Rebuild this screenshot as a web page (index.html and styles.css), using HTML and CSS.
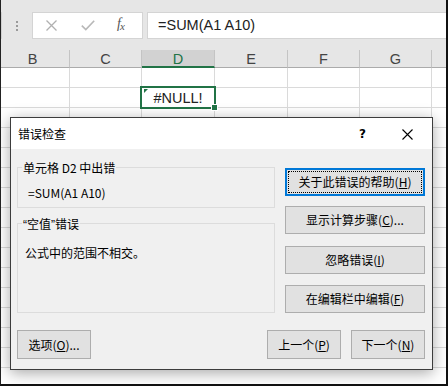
FILE: index.html
```html
<!DOCTYPE html>
<html lang="zh-CN">
<head>
<meta charset="utf-8">
<link rel="stylesheet" href="styles.css">
</head>
<body>
<div class="app">
  <div class="fbar">
    <div class="namebox"></div>
    <div class="grip"><span></span><span></span><span></span></div>
    <div class="fbtns">
      <svg class="ic-x" width="11" height="11" viewBox="0 0 11 11"><path d="M0.5 0.5L10.5 10.5M10.5 0.5L0.5 10.5" stroke="#b0b0b0" stroke-width="1.3" fill="none"/></svg>
      <svg class="ic-ok" width="14" height="11" viewBox="0 0 14 11"><path d="M0.8 5.6L4.8 9.6L13.2 0.8" stroke="#b8b8b8" stroke-width="1.6" fill="none"/></svg>
      <span class="fx">f<sub>x</sub></span>
    </div>
    <div class="finput">=SUM(A1 A10)</div>
  </div>
  <div class="sheet">
    <div class="row head">
      <div class="c cb">B</div><div class="c cc">C</div><div class="c cd sel">D</div><div class="c ce">E</div><div class="c cf">F</div><div class="c cg">G</div><div class="c ch"></div>
    </div>
    <div class="row"><div class="c cb"></div><div class="c cc"></div><div class="c cd"></div><div class="c ce"></div><div class="c cf"></div><div class="c cg"></div><div class="c ch"></div></div>
    <div class="row"><div class="c cb"></div><div class="c cc"></div><div class="c cd active"><span class="tri"></span>#NULL!<span class="handle"></span></div><div class="c ce"></div><div class="c cf"></div><div class="c cg"></div><div class="c ch"></div></div>
    <div class="row"><div class="c cb"></div><div class="c cc"></div><div class="c cd"></div><div class="c ce"></div><div class="c cf"></div><div class="c cg"></div><div class="c ch"></div></div>
    <div class="row"><div class="c cb"></div><div class="c cc"></div><div class="c cd"></div><div class="c ce"></div><div class="c cf"></div><div class="c cg"></div><div class="c ch"></div></div>
    <div class="row"><div class="c cb"></div><div class="c cc"></div><div class="c cd"></div><div class="c ce"></div><div class="c cf"></div><div class="c cg"></div><div class="c ch"></div></div>
    <div class="row"><div class="c cb"></div><div class="c cc"></div><div class="c cd"></div><div class="c ce"></div><div class="c cf"></div><div class="c cg"></div><div class="c ch"></div></div>
    <div class="row"><div class="c cb"></div><div class="c cc"></div><div class="c cd"></div><div class="c ce"></div><div class="c cf"></div><div class="c cg"></div><div class="c ch"></div></div>
    <div class="row"><div class="c cb"></div><div class="c cc"></div><div class="c cd"></div><div class="c ce"></div><div class="c cf"></div><div class="c cg"></div><div class="c ch"></div></div>
    <div class="row"><div class="c cb"></div><div class="c cc"></div><div class="c cd"></div><div class="c ce"></div><div class="c cf"></div><div class="c cg"></div><div class="c ch"></div></div>
    <div class="row"><div class="c cb"></div><div class="c cc"></div><div class="c cd"></div><div class="c ce"></div><div class="c cf"></div><div class="c cg"></div><div class="c ch"></div></div>
    <div class="row"><div class="c cb"></div><div class="c cc"></div><div class="c cd"></div><div class="c ce"></div><div class="c cf"></div><div class="c cg"></div><div class="c ch"></div></div>
    <div class="row"><div class="c cb"></div><div class="c cc"></div><div class="c cd"></div><div class="c ce"></div><div class="c cf"></div><div class="c cg"></div><div class="c ch"></div></div>
    <div class="row"><div class="c cb"></div><div class="c cc"></div><div class="c cd"></div><div class="c ce"></div><div class="c cf"></div><div class="c cg"></div><div class="c ch"></div></div>
    <div class="row"><div class="c cb"></div><div class="c cc"></div><div class="c cd"></div><div class="c ce"></div><div class="c cf"></div><div class="c cg"></div><div class="c ch"></div></div>
    <div class="row"><div class="c cb"></div><div class="c cc"></div><div class="c cd"></div><div class="c ce"></div><div class="c cf"></div><div class="c cg"></div><div class="c ch"></div></div>
  </div>

  <div class="dialog">
    <div class="dtitle">
      <span class="dname">错误检查</span>
      <span class="help">?</span>
      <svg class="close" width="11" height="11" viewBox="0 0 11 11"><path d="M0.5 0.5L10.5 10.5M10.5 0.5L0.5 10.5" stroke="#000" stroke-width="1.1" fill="none"/></svg>
    </div>
    <div class="dbody">
      <div class="dmain">
        <div class="dleft">
          <div class="group g1">
            <div class="glabel">单元格 D2 中出错</div>
            <div class="gtext t1">=SUM(A1 A10)</div>
          </div>
          <div class="group g2">
            <div class="glabel"><span class="q">“</span>空值<span class="q">”</span>错误</div>
            <div class="gtext t2">公式中的范围不相交。</div>
          </div>
        </div>
        <div class="dright">
          <div class="btn focus"><span class="in">关于此错误的帮助(<u>H</u>)</span></div>
          <div class="btn b2">显示计算步骤(<u>C</u>)...</div>
          <div class="btn b3">忽略错误(<u>I</u>)</div>
          <div class="btn b4">在编辑栏中编辑(<u>F</u>)</div>
        </div>
      </div>
      <div class="dfoot">
        <div class="btn small">选项(<u>O</u>)...</div>
        <div class="spacer"></div>
        <div class="btn small">上一个(<u>P</u>)</div>
        <div class="btn small">下一个(<u>N</u>)</div>
      </div>
    </div>
  </div>
</div>
</body>
</html>
```

FILE: styles.css
```css
html, body {
  margin: 0;
  padding: 0;
  background: #fff;
}
.app {
  position: relative;
  width: 448px;
  height: 386px;
  box-sizing: border-box;
  overflow: hidden;
  background: #fff;
  border-right: 2px solid #111;
  border-bottom: 2px solid #111;
  border-left: 1px solid #222;
  font-family: "Liberation Sans", Arial, sans-serif;
}
.fbar {
  height: 50px;
  background: #e6e6e6;
  display: flex;
  align-items: flex-start;
  padding-top: 12px;
  box-sizing: border-box;
}
.namebox {
  width: 2px;
  height: 27px;
  background: #fff;
  border-right: 1px solid #d0d0d0;
  border-top: 1px solid #d6d6d6;
  border-bottom: 1px solid #d6d6d6;
  box-sizing: border-box;
  margin-left: -1px;
}
.grip {
  display: flex;
  flex-direction: column;
  gap: 2px;
  margin: 9px 0 0 14px;
  width: 2px;
}
.grip span {
  display: block;
  width: 2px;
  height: 2px;
  background: #9a9a9a;
}
.fbtns {
  margin-left: 14px;
  width: 111px;
  height: 27px;
  background: #fff;
  border: 1px solid #d4d4d4;
  box-sizing: border-box;
  display: flex;
  align-items: center;
}
.ic-x { margin-left: 13px; }
.ic-ok { margin-left: 24px; }
.fx {
  margin-left: 22px;
  font-family: "Liberation Serif", serif;
  font-style: italic;
  font-size: 14px;
  color: #555;
  line-height: 1;
  margin-top: -3px;
}
.fx sub {
  font-size: 11px;
  vertical-align: -2px;
  margin-left: -1px;
}
.finput {
  margin-left: 4px;
  flex: 1;
  height: 27px;
  background: #fff;
  border: 1px solid #d4d4d4;
  border-right: none;
  box-sizing: border-box;
  padding-left: 10px;
  font-size: 14.5px;
  line-height: 25px;
  color: #222;
}
.sheet {
  margin-left: -5px;
}
.row {
  display: flex;
  height: 20px;
}
.c {
  height: 20px;
  box-sizing: border-box;
  border-right: 1px solid #dadada;
  border-bottom: 1px solid #dadada;
  flex: none;
}
.cb { width: 74px; }
.cc { width: 72px; }
.cd { width: 73px; }
.ce { width: 73px; }
.cf { width: 72px; }
.cg { width: 72px; }
.ch { width: 40px; }
.head {
  height: 18px;
  background: #e6e6e6;
}
.head .c {
  height: 18px;
  border-right: 1px solid #c4c4c4;
  border-bottom: 1px solid #ababab;
  text-align: center;
  font-size: 14.5px;
  line-height: 18px;
  color: #444;
}
.head .sel {
  background: #d2d2d2;
  color: #217346;
  border-bottom: 2px solid #217346;
}
.active {
  position: relative;
  text-align: center;
  font-size: 14.5px;
  line-height: 20px;
  color: #222;
}
.active::after {
  content: "";
  position: absolute;
  left: -2px;
  top: -2px;
  width: 76px;
  height: 23px;
  border: 2px solid #217346;
  box-sizing: border-box;
}
.tri {
  position: absolute;
  left: 2px;
  top: 1px;
  width: 0;
  height: 0;
  border-top: 4px solid #217346;
  border-right: 4px solid transparent;
}
.handle {
  position: absolute;
  right: -4px;
  bottom: -4px;
  width: 5px;
  height: 5px;
  background: #217346;
  border: 1px solid #fff;
  z-index: 2;
}

.dialog {
  position: absolute;
  left: 9px;
  top: 117px;
  width: 423px;
  height: 253px;
  box-sizing: border-box;
  border: 1px solid #3c3c3c;
  background: #f0f0f0;
  box-shadow: 0 3px 14px rgba(0,0,0,0.35);
  font-family: "Noto Sans CJK SC", "Microsoft YaHei", sans-serif;
  font-size: 12px;
  color: #000;
  display: flex;
  flex-direction: column;
}
.dtitle {
  height: 31px;
  background: #fff;
  display: flex;
  align-items: center;
  padding-left: 7px;
  flex: none;
}
.dname {
  flex: 1;
  line-height: 16px;
  margin-top: 1px;
}
.help {
  font-family: "DejaVu Sans", "Liberation Sans", sans-serif;
  font-weight: bold;
  font-size: 12px;
  margin-right: 36px;
  margin-top: 1px;
}
.close {
  margin-right: 19px;
  margin-top: 1px;
}
.dbody {
  flex: 1;
  padding: 0 7px 0 6px;
  display: flex;
  flex-direction: column;
}
.dmain {
  display: flex;
  gap: 10px;
}
.dleft {
  width: 258px;
  padding-top: 18px;
}
.group {
  border: 1px solid #dcdcdc;
  box-sizing: border-box;
}
.g1 { height: 41px; }
.g2 { height: 90px; margin-top: 15px; }
.glabel {
  margin-top: -8px;
  margin-left: 4px;
  width: fit-content;
  padding: 0 1px;
  background: #f0f0f0;
  line-height: 16px;
}
.q {
  font-family: "Liberation Sans", Arial, sans-serif;
}
.gtext { line-height: 16px; }
.t1 { margin-top: 9px; padding-left: 10px; }
.t2 { margin-top: 12px; padding-left: 7px; }
.dright {
  width: 140px;
  padding-top: 19px;
  display: flex;
  flex-direction: column;
}
.btn {
  height: 28px;
  box-sizing: border-box;
  background: #e1e1e1;
  border: 1px solid #adadad;
  display: flex;
  align-items: center;
  justify-content: center;
  line-height: 16px;
  white-space: nowrap;
}
.btn u { text-underline-offset: 1px; }
.focus {
  border: 2px solid #0078d7;
  padding: 1px;
}
.focus .in {
  flex: 1;
  align-self: stretch;
  display: flex;
  align-items: center;
  justify-content: center;
  border: 1px dotted #000;
}
.b2 { margin-top: 10px; }
.b3 { margin-top: 12px; }
.b4 { margin-top: 11px; }
.dfoot {
  display: flex;
  gap: 10px;
  margin-top: 17px;
}
.spacer { flex: 1; }
.btn.small {
  width: 74px;
  height: 29px;
}
```
